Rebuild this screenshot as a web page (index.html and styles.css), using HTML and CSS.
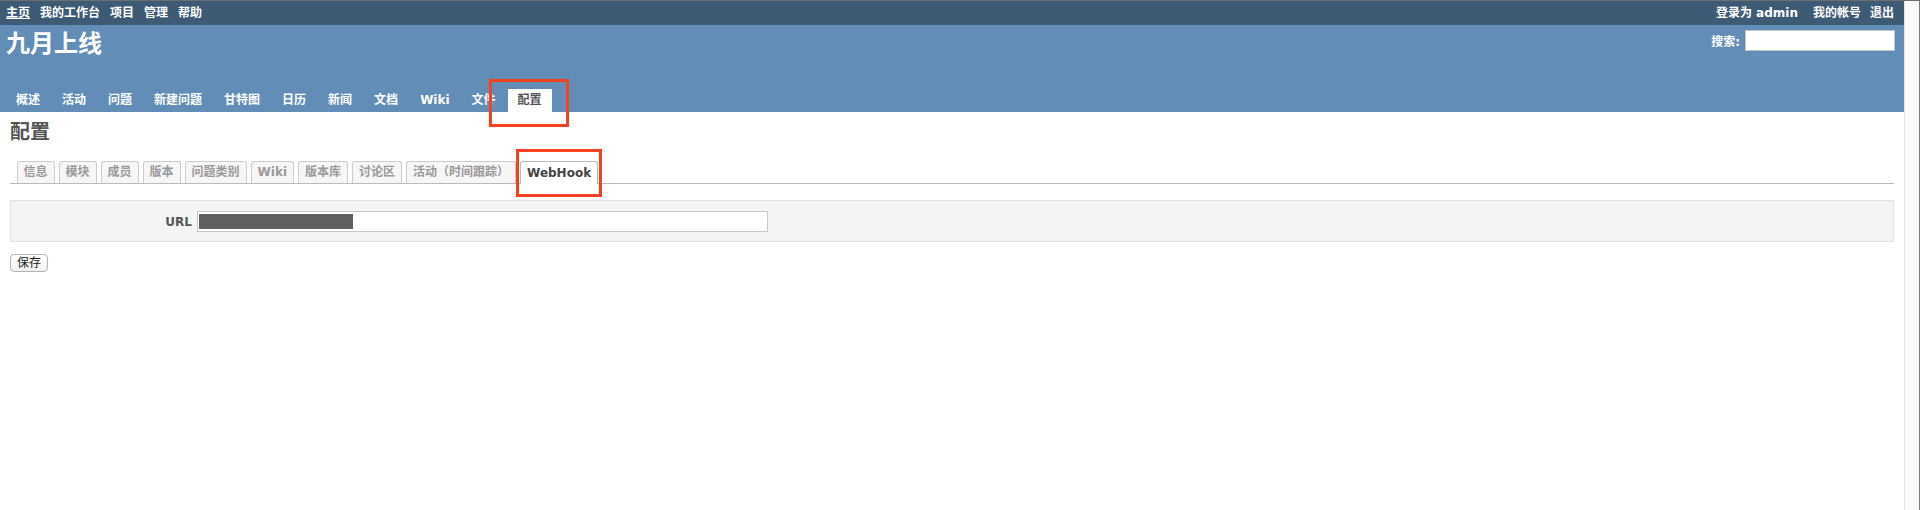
FILE: index.html
```html
<!DOCTYPE html>
<html lang="zh-CN">
<head>
<meta charset="utf-8">
<title>配置 - 九月上线</title>
<link rel="stylesheet" href="styles.css">
</head>
<body>
<div class="screen">
  <div class="page">
    <div class="top-menu">
      <ul class="top-links">
        <li><a class="home">主页</a></li>
        <li><a>我的工作台</a></li>
        <li><a>项目</a></li>
        <li><a>管理</a></li>
        <li><a>帮助</a></li>
      </ul>
      <div class="account">
        <span class="loggedas">登录为 admin</span>
        <a class="my-account">我的帐号</a>
        <a class="logout">退出</a>
      </div>
    </div>
    <div class="header">
      <div class="header-row">
        <h1 class="title">九月上线</h1>
        <div class="search">
          <label class="search-label">搜索:</label>
          <span class="search-input"></span>
        </div>
      </div>
      <ul class="main-menu">
        <li><a>概述</a></li>
        <li><a>活动</a></li>
        <li><a>问题</a></li>
        <li><a>新建问题</a></li>
        <li><a>甘特图</a></li>
        <li><a>日历</a></li>
        <li><a>新闻</a></li>
        <li><a>文档</a></li>
        <li><a>Wiki</a></li>
        <li><a>文件</a></li>
        <li><a class="selected">配置</a></li>
      </ul>
    </div>
    <div class="content">
      <h2 class="page-title">配置</h2>
      <ul class="tabs">
        <li><a>信息</a></li>
        <li><a>模块</a></li>
        <li><a>成员</a></li>
        <li><a>版本</a></li>
        <li><a>问题类别</a></li>
        <li><a>Wiki</a></li>
        <li><a>版本库</a></li>
        <li><a>讨论区</a></li>
        <li><a>活动（时间跟踪）</a></li>
        <li><a class="selected">WebHook</a></li>
      </ul>
      <div class="box">
        <p class="field">
          <label class="field-label">URL</label>
          <span class="url-input"><span class="redact"></span></span>
        </p>
      </div>
      <button class="save">保存</button>
    </div>
    <div class="annot annot-menu"></div>
    <div class="annot annot-tab"></div>
  </div>
  <div class="scrollbar"></div>
</div>
</body>
</html>
```

FILE: styles.css
```css
* { box-sizing: border-box; }

html, body {
  margin: 0;
  padding: 0;
  background: #fff;
}

body {
  font-family: "DejaVu Sans", "Noto Sans CJK SC", sans-serif;
  font-size: 12px;
  color: #333;
}

.screen {
  display: flex;
  width: 1920px;
  height: 510px;
  border-top: 1px solid #6e6e6e;
}

.page {
  position: relative;
  flex: 1;
  min-width: 0;
}

.scrollbar {
  width: 16px;
  background: #fafafa;
  border-left: 1px solid #e4e4e4;
  border-right: 1px solid #7c7c7c;
}

/* top menu */
.top-menu {
  height: 24px;
  background: #3e5b76;
  color: #fff;
  display: flex;
  align-items: center;
  justify-content: space-between;
  padding: 0 10px 0 6px;
  font-weight: bold;
  font-size: 12px;
  line-height: 14px;
}

.top-links {
  display: flex;
  gap: 10px;
  list-style: none;
  margin: 0;
  padding: 0;
}

.top-links a { color: #fff; }
.top-links a.home { text-decoration: underline; }

.account {
  display: flex;
  align-items: center;
}

.loggedas { margin-right: 15px; }
.my-account { margin-right: 9px; }

/* header */
.header {
  height: 87px;
  background: #628db6;
  color: #fff;
  display: flex;
  flex-direction: column;
  padding-top: 5px;
}

.header-row {
  display: flex;
  justify-content: space-between;
  align-items: flex-start;
  padding: 0 9px 0 6px;
}

.title {
  margin: 2px 0 0;
  font-size: 24px;
  line-height: 24px;
  font-weight: bold;
}

.search {
  display: flex;
  align-items: center;
  gap: 5px;
  font-weight: bold;
  font-size: 12px;
}

.search-input {
  display: block;
  width: 150px;
  height: 21px;
  background: #fff;
  border: 1px solid #c4c4c4;
}

.main-menu {
  margin: auto 0 0;
  padding: 0 0 0 6px;
  list-style: none;
  display: flex;
  gap: 2px;
}

.main-menu a {
  display: block;
  padding: 4px 10px;
  line-height: 15px;
  font-weight: bold;
  font-size: 12px;
  color: #fff;
}

.main-menu a.selected {
  background: #fff;
  color: #555;
}

/* content */
.content {
  padding: 0 10px;
}

.page-title {
  margin: 10px 0 0;
  font-size: 20px;
  line-height: 20px;
  font-weight: bold;
  color: #555;
}

.tabs {
  list-style: none;
  margin: 19px 0 0;
  padding: 0 0 0 6.5px;
  display: flex;
  align-items: flex-end;
  gap: 4px;
  border-bottom: 1px solid #bbb;
}

.tabs a {
  display: block;
  padding: 0 6px;
  line-height: 21px;
  font-size: 12px;
  font-weight: bold;
  color: #999;
  background: #f6f6f6;
  border: 1px solid #ccc;
  border-bottom: none;
  border-radius: 3px 3px 0 0;
}

.tabs a.selected {
  background: #fff;
  color: #444;
  border-color: #bbb;
  line-height: 22px;
  margin-bottom: -1px;
}

.box {
  margin-top: 16px;
  background: #f4f4f4;
  border: 1px solid #e1e1e1;
  padding: 10px 6px 9px;
}

.field {
  margin: 0;
  display: grid;
  grid-template-columns: 180px 571px;
  align-items: center;
}

.field-label {
  text-align: right;
  padding-right: 5px;
  font-weight: bold;
  color: #555;
  font-size: 12px;
}

.url-input {
  display: block;
  height: 21px;
  background: #fff;
  border: 1px solid #c8c8c8;
  padding: 2px 1px 1px;
}

.redact {
  display: block;
  width: 154px;
  height: 15px;
  background: #616161;
}

.save {
  display: block;
  margin-top: 12px;
  width: 38px;
  height: 18px;
  padding: 0;
  font-family: "DejaVu Sans", "Noto Sans CJK SC", sans-serif;
  font-size: 12px;
  line-height: 16px;
  color: #222;
  background: linear-gradient(#ffffff, #f0f0f0);
  border: 1px solid #b3b3b3;
  border-radius: 4px;
}

/* annotation boxes overlaid on the screenshot */
.annot {
  position: absolute;
  border: 3px solid #f4411f;
}

.annot-menu {
  left: 489px;
  top: 78px;
  width: 80px;
  height: 48px;
}

.annot-tab {
  left: 516px;
  top: 148px;
  width: 86px;
  height: 48px;
}
```
